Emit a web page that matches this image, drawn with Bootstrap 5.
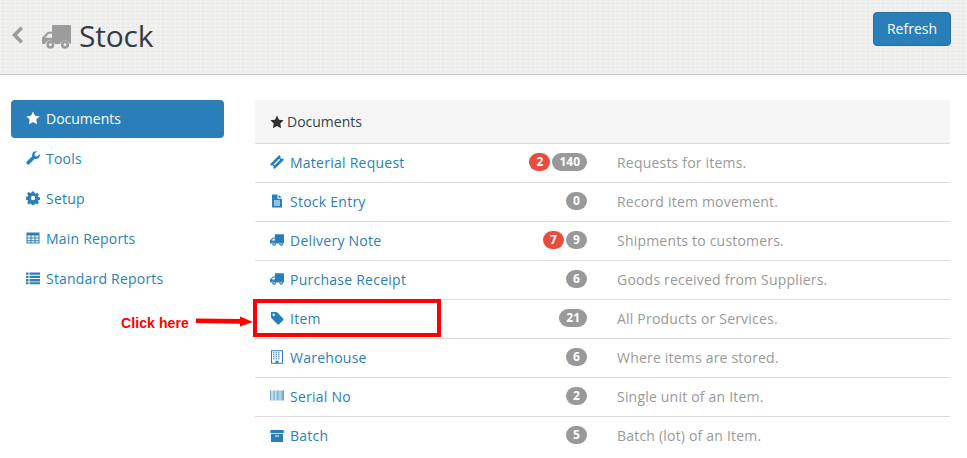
<!DOCTYPE html>
<html lang="en">
<head>
    <meta charset="UTF-8">
    <meta name="viewport" content="width=device-width, initial-scale=1.0">
    <title>Stock</title>
    <link href="https://cdn.jsdelivr.net/npm/bootstrap@5.3.0/dist/css/bootstrap.min.css" rel="stylesheet">
    <style>
        html, body { height: 458px; overflow: hidden; }
        body { font-family: "Open Sans", "Liberation Sans", sans-serif; font-size: 14px; color: #36414c; position: relative; }
        .page-top {
            height: 75px; border-bottom: 1px solid #c8c8c8; padding: 12px 16px 0 10px;
            background-color: #ececeb;
            background-image:
                repeating-linear-gradient(0deg, rgba(255,255,255,.3) 0 1px, transparent 1px 4px),
                repeating-linear-gradient(90deg, rgba(255,255,255,.3) 0 1px, transparent 1px 5px);
        }
        .back-ico { width: 15px; height: 20px; fill: #9c9c9c; margin-top: 13px; }
        .truck-big { width: 29px; height: 24px; fill: #9c9c9c; margin: 13px 0 0 17px; }
        .page-name { font-size: 30px; line-height: 48px; font-weight: 400; color: #333c45; margin: 0 0 0 8px; letter-spacing: -.2px; }
        .btn-refresh { background: #2a7fb8; border: 1px solid #26709f; color: #fff; font-size: 14px; line-height: 20px; padding: 6px 12px; border-radius: 4px; height: 34px; width: 78px; }
        .side-col { width: 213px; margin: 25px 0 0 11px; flex: none; }
        .side-link { display: flex; align-items: center; height: 38px; margin-bottom: 2px; padding: 0 0 2px 15px; color: #2a7fb8; text-decoration: none; border-radius: 4px; letter-spacing: .2px; }
        .side-link.is-on { background: #2a7fb8; color: #fff; letter-spacing: 0; }
        .ico { width: 14px; height: 14px; fill: currentColor; flex: none; }
        .side-link .ico { margin-right: 6px; }
        .main-col { width: 695px; margin: 25px 0 0 31px; flex: none; }
        .doc-head { height: 44px; background: #f5f5f5; border-bottom: 1px solid #ddd; padding-left: 15px; display: flex; align-items: center; color: #36414c; border-radius: 3px 3px 0 0; }
        .doc-head .ico { margin-right: 3px; color: #2f2f2f; }
        .doc-row { height: 39px; border-bottom: 1px solid #ddd; display: flex; align-items: center; padding-left: 15px; }
        .doc-row:last-child { border-bottom: 0; }
        .doc-row a { color: #2a7fb8; text-decoration: none; width: 242px; display: flex; align-items: center; flex: none; padding-bottom: 2px; letter-spacing: .25px; }
        .doc-row a .ico { margin-right: 6px; }
        .nums { width: 75px; flex: none; display: flex; justify-content: flex-end; gap: 2px; padding-bottom: 3px; }
        .num { background: #999; color: #fff; font-size: 12px; font-weight: 700; line-height: 12px; padding: 3px 7px; border-radius: 10px; min-width: 21px; text-align: center; }
        .num.num-red { background: #e74c3c; }
        .doc-desc { margin-left: 30px; padding-bottom: 2px; color: #999; letter-spacing: .2px; }
        .red-box { position: absolute; left: 253px; top: 299px; width: 188px; height: 38px; border: 4px solid #f00; }
        .click-note { position: absolute; left: 121px; top: 314px; font-family: "Liberation Sans", Arial, sans-serif; font-size: 14px; font-weight: 700; line-height: 18px; letter-spacing: .1px; color: #f00; }
        .click-arrow { position: absolute; left: 195px; top: 315px; width: 58px; height: 14px; }
    </style>
</head>
<body>
    <svg width="0" height="0" class="position-absolute">
        <defs>
            <symbol id="i-star" viewBox="0 0 14 14"><path d="M7 .4l2 4.300 4.700.6-3.400 3.300.8 4.700L7 11.100l-4.100 2.200.8-4.700L.3 5.300 5 4.700z"/></symbol>
            <symbol id="i-wrench" viewBox="0 0 14 14"><path d="M13.700 3.100c.4 1.500-.1 3-1.200 4-1.100.9-2.500 1.100-3.800.6L3.400 13.100c-.7.700-1.800.7-2.500 0s-.7-1.800 0-2.500l5.400-5.300C5.800 4 6 2.500 7 1.400 8 .4 9.500 0 10.900.400L8.500 2.800l.4 2.200 2.200.5z"/></symbol>
            <symbol id="i-cog" viewBox="0 0 14 14"><path fill-rule="evenodd" d="M5.800.5h2.400l.4 1.800 1 .4 1.600-1 1.700 1.700-1 1.600.4 1 1.800.4v2.400l-1.800.4-.4 1 1 1.600-1.700 1.700-1.600-1-1 .4-.4 1.800H5.800l-.4-1.800-1-.4-1.600 1-1.700-1.700 1-1.600-.4-1-1.800-.4V5.800l1.800-.4.4-1-1-1.600L2.800 1.100l1.600 1 1-.4zM7 4.800a2.200 2.200 0 100 4.400 2.200 2.200 0 000-4.400z"/></symbol>
            <symbol id="i-table" viewBox="0 0 14 14"><path fill-rule="evenodd" d="M.5 1.500h13v11H.5zM1.500 4.500v2h3v-2zm4 0v2h3v-2zm4 0v2h3v-2zm-8 3v1.800h3V7.500zm4 0v1.800h3V7.500zm4 0v1.800h3V7.500zm-8 2.800v1.200h3v-1.200zm4 0v1.200h3v-1.200zm4 0v1.200h3v-1.200z"/></symbol>
            <symbol id="i-list" viewBox="0 0 14 14"><path d="M0 1.500h2.500v2.300H0zM3.500 1.500H14v2.300H3.500zM0 4.800h2.500v2.300H0zM3.500 4.800H14v2.300H3.500zM0 8.100h2.500v2.300H0zM3.500 8.100H14v2.300H3.500zM0 11.200h2.500v2.100H0zM3.500 11.200H14v2.100H3.500z"/></symbol>
            <symbol id="i-ticket" viewBox="0 0 14 14"><path fill-rule="evenodd" d="M9.300 0l1.300 1.300a1.500 1.500 0 002.100 2.100L14 4.700 4.700 14l-1.300-1.300a1.500 1.500 0 00-2.100-2.100L0 9.300zM9.300 3.800L3.800 9.300l.9.900 5.500-5.500z"/></symbol>
            <symbol id="i-file" viewBox="0 0 14 14"><path fill-rule="evenodd" d="M2 .5h5.500v4.200H12V13.500H2zM8.500.7L11.800 3.800H8.500zM4 6.500v1h6v-1zm0 2v1h6v-1zm0 2v1h6v-1z"/></symbol>
            <symbol id="i-truck" viewBox="0 0 29 24"><path fill-rule="evenodd" d="M11 0h17a1 1 0 011 1v17a1 1 0 01-1 1h-.200a5 5 0 00-9.600 0h-5.400a5 5 0 00-9.600 0H1a1 1 0 01-1-1v-4.500c0-.6.200-1 .6-1.400L5.400 7.300C5.800 6.900 6.300 6.700 6.800 6.700H10V1a1 1 0 011-1zM3 12.800h7V8.800H6.800zM8.400 15.700a4 4 0 110 8 4 4 0 010-8zm14.600 0a4 4 0 110 8 4 4 0 010-8zm-14.600 2.600a1.400 1.400 0 100 2.800 1.400 1.400 0 000-2.800zm14.600 0a1.400 1.400 0 100 2.800 1.400 1.400 0 000-2.800z"/></symbol>
            <symbol id="i-tag" viewBox="0 0 14 14"><path fill-rule="evenodd" d="M1 1h5.200c.4 0 .8.200 1.100.5l5.900 5.900c.5.500.5 1.300 0 1.800l-4 4c-.5.500-1.300.5-1.800 0L1.500 7.300C1.200 7 1 6.600 1 6.200zM3.700 2.500a1.200 1.200 0 100 2.400 1.200 1.200 0 000-2.400z"/></symbol>
            <symbol id="i-building" viewBox="0 0 14 14"><path fill-rule="evenodd" d="M1 .3h12v13.400H1zM2 1.300v11.400h3.500v-2h3v2H12V1.300zM3 2.300h1.500v1H3zm2.500 0H7v1H5.500zm2.500 0h1.500v1H8zM3 4.300h1.500v1H3zm2.500 0H7v1H5.500zm2.500 0h1.500v1H8zM3 6.300h1.500v1H3zm2.500 0H7v1H5.500zm2.500 0h1.500v1H8zM3 8.300h1.500v1H3zm2.500 0H7v1H5.500zm2.500 0h1.500v1H8z"/></symbol>
            <symbol id="i-barcode" viewBox="0 0 14 14"><path d="M0 1.500h1v10H0zM1.600 1.500h.7v10h-.7zM2.900 1.500h.7v10h-.7zM4.200 1.500h1v10h-1zM5.900 1.500h.7v10h-.7zM7 1.500h.8v10H7zM8.300 1.500h.7v10h-.7zM9.500 1.500h1v10h-1zM11 1.500h.7v10H11zM12.200 1.500H14v10h-1.800z" opacity=".7"/></symbol>
            <symbol id="i-archive" viewBox="0 0 14 14"><path fill-rule="evenodd" d="M.3 1h13.400v3.300H.3zM1 5h12v8H1zM5 6.500v1h4v-1z"/></symbol>
        </defs>
    </svg>

    <div class="page-top d-flex">
        <svg class="back-ico" viewBox="0 0 15 20"><path d="M10.500 1.500l2.500 2.500L7 10l6 6-2.500 2.500L2 10z"/></svg>
        <svg class="truck-big"><use href="#i-truck"/></svg>
        <h1 class="page-name">Stock</h1>
        <button type="button" class="btn btn-refresh ms-auto">Refresh</button>
    </div>

    <div class="d-flex">
        <div class="side-col">
            <a class="side-link is-on" href="#"><svg class="ico"><use href="#i-star"/></svg>Documents</a>
            <a class="side-link" href="#"><svg class="ico"><use href="#i-wrench"/></svg>Tools</a>
            <a class="side-link" href="#"><svg class="ico"><use href="#i-cog"/></svg>Setup</a>
            <a class="side-link" href="#"><svg class="ico"><use href="#i-table"/></svg>Main Reports</a>
            <a class="side-link" href="#"><svg class="ico"><use href="#i-list"/></svg>Standard Reports</a>
        </div>
        <div class="main-col">
            <div class="doc-head"><svg class="ico"><use href="#i-star"/></svg>Documents</div>
            <div class="doc-row"><a href="#"><svg class="ico"><use href="#i-ticket"/></svg>Material Request</a><div class="nums"><span class="num num-red">2</span><span class="num">140</span></div><div class="doc-desc">Requests for items.</div></div>
            <div class="doc-row"><a href="#"><svg class="ico"><use href="#i-file"/></svg>Stock Entry</a><div class="nums"><span class="num">0</span></div><div class="doc-desc">Record item movement.</div></div>
            <div class="doc-row"><a href="#"><svg class="ico"><use href="#i-truck"/></svg>Delivery Note</a><div class="nums"><span class="num num-red">7</span><span class="num">9</span></div><div class="doc-desc">Shipments to customers.</div></div>
            <div class="doc-row"><a href="#"><svg class="ico"><use href="#i-truck"/></svg>Purchase Receipt</a><div class="nums"><span class="num">6</span></div><div class="doc-desc">Goods received from Suppliers.</div></div>
            <div class="doc-row"><a href="#"><svg class="ico"><use href="#i-tag"/></svg>Item</a><div class="nums"><span class="num">21</span></div><div class="doc-desc">All Products or Services.</div></div>
            <div class="doc-row"><a href="#"><svg class="ico"><use href="#i-building"/></svg>Warehouse</a><div class="nums"><span class="num">6</span></div><div class="doc-desc">Where items are stored.</div></div>
            <div class="doc-row"><a href="#"><svg class="ico"><use href="#i-barcode"/></svg>Serial No</a><div class="nums"><span class="num">2</span></div><div class="doc-desc">Single unit of an Item.</div></div>
            <div class="doc-row"><a href="#"><svg class="ico"><use href="#i-archive"/></svg>Batch</a><div class="nums"><span class="num">5</span></div><div class="doc-desc">Batch (lot) of an Item.</div></div>
        </div>
    </div>

    <div class="red-box"></div>
    <div class="click-note">Click here</div>
    <svg class="click-arrow" viewBox="0 0 58 14"><path d="M1 3.500l44 .6V1.500L58 7 45 11.500V8.700L1 8z" fill="#f00"/></svg>

    <script src="https://cdn.jsdelivr.net/npm/bootstrap@5.3.0/dist/js/bootstrap.bundle.min.js"></script>
</body>
</html>
